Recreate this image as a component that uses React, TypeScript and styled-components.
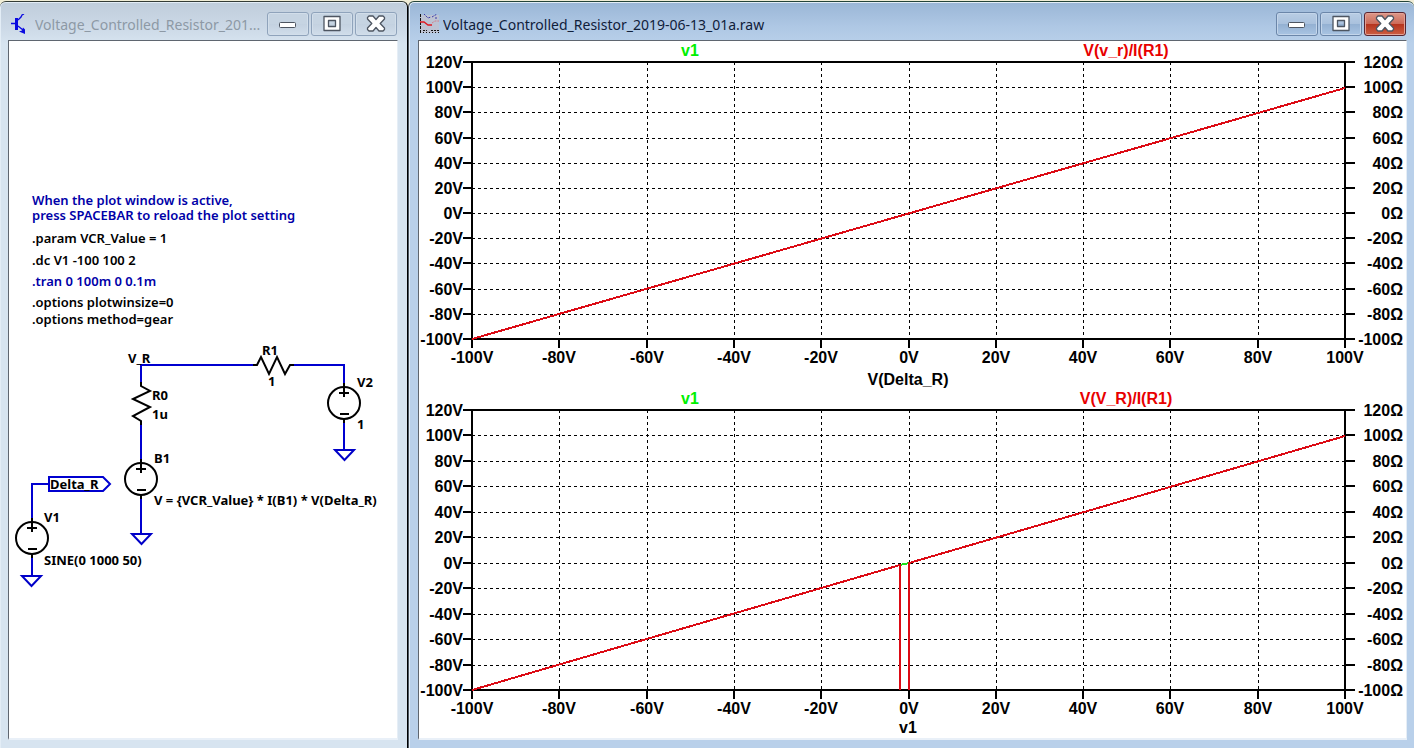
import React from "react";
import styled, { createGlobalStyle } from "styled-components";

const GlobalStyle = createGlobalStyle`
  * { box-sizing: border-box; }
  html, body, #root { height: 100%; }
  body { margin: 0; background: #f0edd6; font-family: "Noto Sans", "Open Sans", sans-serif; }
`;

const Desktop = styled.main`
  display: grid;
  grid-template-columns: minmax(0, 408fr) minmax(0, 1006fr);
  min-height: 100%;
  padding-top: 1px;
`;

const Window = styled.section<{ $active?: boolean }>`
  display: flex;
  flex-direction: column;
  min-width: 0;
  padding: 0 ${(p) => (p.$active ? "7px 8px 9px" : "9px 8px 8px")};
  border-top: 1px solid ${(p) => (p.$active ? "#24443a" : "#333c36")};
  border-right: ${(p) => (p.$active ? "0" : "1px solid #000")};
  border-left: ${(p) => (p.$active ? "1px solid #4b5560" : "0")};
  border-radius: 6px 6px 0 0;
  box-shadow: inset 0 1px 0 #e3edf6, inset 1px 0 0 #e3edf6;
  background: ${(p) =>
    p.$active
      ? "linear-gradient(#9ab6d6 0, #aec7e4 24px, #b9d0ea 42px)"
      : "linear-gradient(#bfcddb 0, #cbd8e6 24px, #d7e4f0 42px)"};
`;

const TitleBar = styled.header<{ $active?: boolean }>`
  display: flex;
  align-items: center;
  height: 38px;
  padding: 6px 1px 0 ${(p) => (p.$active ? "1px" : "3px")};
  gap: 4px;
`;

const Title = styled.h1<{ $active?: boolean }>`
  flex: 1;
  min-width: 0;
  margin: 0;
  padding-top: 2px;
  overflow: hidden;
  font-size: 14px;
  line-height: 22px;
  font-weight: 400;
  white-space: nowrap;
  color: ${(p) => (p.$active ? "#10203a" : "#8d99a5")};
`;

const WindowIcon = styled.svg`
  flex: none;
  display: block;
`;

const Controls = styled.div`
  display: flex;
  gap: 2px;
`;

const ControlButton = styled.button<{ $tone: "idle" | "active" | "close" }>`
  display: grid;
  place-items: center;
  width: 42px;
  height: 24px;
  padding: 0;
  border-radius: 3px;
  border: 1px solid
    ${(p) => ({ idle: "#8fa3bb", active: "#6b86a9", close: "#5a2530" })[p.$tone]};
  box-shadow: inset 0 0 0 1px
    ${(p) => ({ idle: "#d2deea", active: "#c3d5ea", close: "#e2a296" })[p.$tone]};
  background: ${(p) =>
    ({
      idle: "linear-gradient(#c6d4e2 0 50%, #c3d1e0 50%, #d0ddea)",
      active: "linear-gradient(#b9cde4 0, #a9c1dd 50%, #93b0d2 50%, #a9c4e2)",
      close: "linear-gradient(#dd9788 0, #cc6a58 50%, #b5331d 50%, #cc5e42)",
    })[p.$tone]};
`;

const Client = styled.div`
  flex: 1;
  border: 1px solid #5f6670;
  border-width: 1px 1px 2px 1px;
  border-right-color: #e6eef6;
  border-bottom-color: #e9f0f8;
  background: #fff;
`;

const Drawing = styled.svg`
  display: block;
  width: 100%;
  height: auto;
`;

const SchematicText = styled.text<{ $comment?: boolean; $label?: boolean }>`
  font-family: "Noto Sans", "DejaVu Sans", sans-serif;
  font-size: 13px;
  font-weight: ${(p) => (p.$label ? 700 : 600)};
  fill: ${(p) => (p.$comment ? "#0000a8" : "#000")};
`;

const ChartText = styled.text`
  font-family: "Liberation Sans", Arial, sans-serif;
  font-size: 16px;
  font-weight: 700;
`;

type Glyph = "minimize" | "maximize" | "close";

function ControlGlyph({ kind }: { kind: Glyph }) {
  return (
    <svg width="22" height="18" viewBox="0 0 22 18" aria-hidden="true">
      {kind === "minimize" && (
        <rect x="2.5" y="7.5" width="16" height="5" rx="1" fill="#fff" stroke="#4d5561" />
      )}
      {kind === "maximize" && (
        <path
          d="M3 1.500h16v14h-16zM7.500 5.500v6h7v-6z"
          fill="#fff"
          fillRule="evenodd"
          stroke="#4d5561"
          strokeWidth="1.300"
          strokeLinejoin="round"
        />
      )}
      {kind === "close" && (
        <path
          d="M2.500 2.500l1.500-1.500h4l3 3.500 3-3.500h4l1.500 1.500v1.500l-4.300 4.500 4.300 4.500v1.500l-1.500 1.500h-4l-3-3.500-3 3.500h-4l-1.500-1.500v-1.500l4.300-4.500-4.300-4.500z"
          fill="#fff"
          stroke="#4d5561"
          strokeWidth="1.300"
          strokeLinejoin="round"
        />
      )}
    </svg>
  );
}

function WindowControls({ active }: { active?: boolean }) {
  const tone = active ? "active" : "idle";
  return (
    <Controls>
      <ControlButton $tone={tone} aria-label="Minimize">
        <ControlGlyph kind="minimize" />
      </ControlButton>
      <ControlButton $tone={tone} aria-label="Maximize">
        <ControlGlyph kind="maximize" />
      </ControlButton>
      <ControlButton $tone={active ? "close" : "idle"} aria-label="Close">
        <ControlGlyph kind="close" />
      </ControlButton>
    </Controls>
  );
}

function TransistorIcon() {
  return (
    <WindowIcon width="20" height="20" viewBox="0 0 20 20" aria-hidden="true">
      <g fill="none" stroke="#0a0ae0">
        <path d="M0 9.500h5M7 6l3-3 1-2 2-1M7 12l5 4" strokeWidth="1.300" />
        <path d="M5.500 4v12" strokeWidth="3" />
      </g>
      <path d="M14 20l-6-2.500 3-1 1-3 2 2z" fill="#0a0ae0" />
    </WindowIcon>
  );
}

function WaveIcon() {
  return (
    <WindowIcon width="20" height="20" viewBox="0 0 20 20" aria-hidden="true">
      <path d="M1 1h19v18h-19z" fill="#bdc3d3" />
      <path d="M1.500 0v20" stroke="#111" strokeDasharray="3 1" />
      <path d="M1 18.500h19" stroke="#111" strokeDasharray="1 2" />
      <path d="M4 16.500h4M12 16.500h8" stroke="#111" strokeDasharray="2 1" />
      <path d="M5 0l4 4 3-1M13 3l5-3M16 4h3" fill="none" stroke="#3a3aa8" strokeDasharray="2 1" />
      <path d="M1 8h4l4 3h4" fill="none" stroke="#e01820" strokeWidth="1.300" />
      <path d="M13 9l3-2h4" fill="none" stroke="#d0808c" strokeDasharray="2 1" />
    </WindowIcon>
  );
}

function Source({ x, y }: { x: number; y: number }) {
  return (
    <g transform={`translate(${x} ${y})`} fill="none" stroke="#000" strokeWidth="2">
      <circle r="16" />
      <path d="M0-20v14M-5-10h10M-4 11h9M0 16v4" />
    </g>
  );
}

function Ground({ x, y }: { x: number; y: number }) {
  return (
    <path
      transform={`translate(${x} ${y})`}
      d="M-9 0h19l-9.500 10z"
      fill="none"
      stroke="#0000c8"
      strokeWidth="2"
    />
  );
}

const directives: { y: number; lines: string[]; comment?: boolean }[] = [
  {
    y: 205,
    lines: ["When the plot window is active,", "press SPACEBAR to reload the plot setting"],
    comment: true,
  },
  { y: 243, lines: [".param VCR_Value = 1"] },
  { y: 265, lines: [".dc V1 -100 100 2"] },
  { y: 286, lines: [".tran 0 100m 0 0.1m"], comment: true },
  { y: 307, lines: [".options plotwinsize=0"] },
  { y: 324, lines: [".options method=gear"] },
];

const labels: [number, number, string][] = [
  [128, 363, "V_R"],
  [262, 355, "R1"],
  [268, 386, "1"],
  [152, 400, "R0"],
  [152, 419, "1u"],
  [357, 387, "V2"],
  [357, 429, "1"],
  [154, 463, "B1"],
  [154, 505, "V = {VCR_Value} * I(B1) * V(Delta_R)"],
  [50, 489, "Delta_R"],
  [44, 522, "V1"],
  [44, 565, "SINE(0 1000 50)"],
];

function Schematic() {
  return (
    <Drawing viewBox="9 41 388 696" role="img" aria-label="Circuit schematic">
      <g fill="none" stroke="#0000d0" strokeWidth="2">
        <path d="M141 385v-20h112M292 365h52v18M141 424v35M141 498v36M344 421v29" />
        <path d="M32 519v-35h16M32 557v18" />
        <path d="M49 477h54l7 7-7 7h-54z" />
      </g>
      <g fill="none" stroke="#000" strokeWidth="2">
        <path d="M253 365h4l4-8 8 17 8-17 8 17 5-9h4" />
        <path d="M141 382v4l9 5-17 8 17 8-17 9 8 5v4" />
      </g>
      <Source x={344} y={403} />
      <Source x={141} y={479} />
      <Source x={32} y={538} />
      <Ground x={344} y={450} />
      <Ground x={141} y={534} />
      <Ground x={31} y={576} />
      {directives.map((d) => (
        <SchematicText key={d.y} $comment={d.comment}>
          {d.lines.map((line, i) => (
            <tspan key={line} x={32} y={d.y + i * 15}>
              {line}
            </tspan>
          ))}
        </SchematicText>
      ))}
      {labels.map(([x, y, text]) => (
        <SchematicText key={`${x}-${y}`} x={x} y={y} $label>
          {text}
        </SchematicText>
      ))}
    </Drawing>
  );
}

const LEFT = 53;
const RIGHT = 926;
const TOP = 21;
const VALUES = [120, 100, 80, 60, 40, 20, 0, -20, -40, -60, -80, -100];
const X_VALUES = [-100, -80, -60, -40, -20, 0, 20, 40, 60, 80, 100];

interface PlotProps {
  plotHeight: number;
  viewHeight: number;
  trace: string;
  xLabel: string;
  dip?: boolean;
}

function Plot({ plotHeight, viewHeight, trace, xLabel, dip }: PlotProps) {
  const bottom = TOP + plotHeight;
  const xAt = (v: number) => Math.round(LEFT + ((v + 100) / 200) * (RIGHT - LEFT));
  const yAt = (v: number) => Math.round(TOP + ((120 - v) / 220) * plotHeight);
  return (
    <Drawing viewBox={`0 0 987 ${viewHeight}`} role="img" aria-label={`${trace} against ${xLabel}`}>
      <g stroke="#000" strokeDasharray="3 3" shapeRendering="crispEdges">
        {VALUES.slice(1, -1).map((v) => (
          <path key={v} d={`M${LEFT} ${yAt(v) + 0.5}H${RIGHT}`} />
        ))}
        {X_VALUES.slice(1, -1).map((v) => (
          <path key={v} d={`M${xAt(v) + 0.5} ${TOP}V${bottom}`} />
        ))}
      </g>
      <g stroke="#000" strokeWidth="2" fill="none" shapeRendering="crispEdges">
        <path d={`M${LEFT} ${TOP}H${RIGHT}V${bottom}H${LEFT}z`} />
        {VALUES.map((v) => (
          <path key={v} d={`M${LEFT - 9} ${yAt(v)}h9M${RIGHT} ${yAt(v)}h10`} />
        ))}
        {X_VALUES.map((v) => (
          <path key={v} d={`M${xAt(v)} ${bottom}v9`} />
        ))}
      </g>
      <g fill="none" strokeWidth="2" shapeRendering="crispEdges">
        {dip ? (
          <>
            <path d={`M${xAt(-2)} ${yAt(-2)}L${xAt(0)} ${yAt(0)}`} stroke="#1be01b" />
            <path
              d={`M${LEFT} ${bottom}L${xAt(-2)} ${yAt(-2)}V${bottom}M${xAt(0)} ${bottom}V${yAt(0)}L${RIGHT} ${yAt(100) + 1}`}
              stroke="#dc0a14"
            />
          </>
        ) : (
          <path d={`M${LEFT} ${bottom}L${RIGHT} ${yAt(100) + 1}`} stroke="#dc0a14" />
        )}
      </g>
      {VALUES.map((v) => (
        <g key={v}>
          <ChartText x={LEFT - 9} y={yAt(v) + 6} textAnchor="end">{`${v}V`}</ChartText>
          <ChartText x={RIGHT + 58} y={yAt(v) + 6} textAnchor="end">{`${v}Ω`}</ChartText>
        </g>
      ))}
      {X_VALUES.map((v) => (
        <ChartText key={v} x={xAt(v)} y={bottom + 24} textAnchor="middle">{`${v}V`}</ChartText>
      ))}
      <ChartText x="489" y={bottom + (dip ? 43 : 46)} textAnchor="middle">
        {xLabel}
      </ChartText>
      <ChartText x="271" y="15" textAnchor="middle" fill="#00f000">
        v1
      </ChartText>
      <ChartText x="707" y="15" textAnchor="middle" fill="#e80000">
        {trace}
      </ChartText>
    </Drawing>
  );
}

export default function App() {
  return (
    <>
      <GlobalStyle />
      <Desktop>
        <Window aria-label="Schematic">
          <TitleBar>
            <TransistorIcon />
            <Title>Voltage_Controlled_Resistor_201...</Title>
            <WindowControls />
          </TitleBar>
          <Client>
            <Schematic />
          </Client>
        </Window>
        <Window $active aria-label="Waveforms">
          <TitleBar $active>
            <WaveIcon />
            <Title $active>Voltage_Controlled_Resistor_2019-06-13_01a.raw</Title>
            <WindowControls active />
          </TitleBar>
          <Client>
            <Plot plotHeight={277} viewHeight={348} trace="V(v_r)/I(R1)" xLabel="V(Delta_R)" />
            <Plot plotHeight={280} viewHeight={349} trace="V(V_R)/I(R1)" xLabel="v1" dip />
          </Client>
        </Window>
      </Desktop>
    </>
  );
}
